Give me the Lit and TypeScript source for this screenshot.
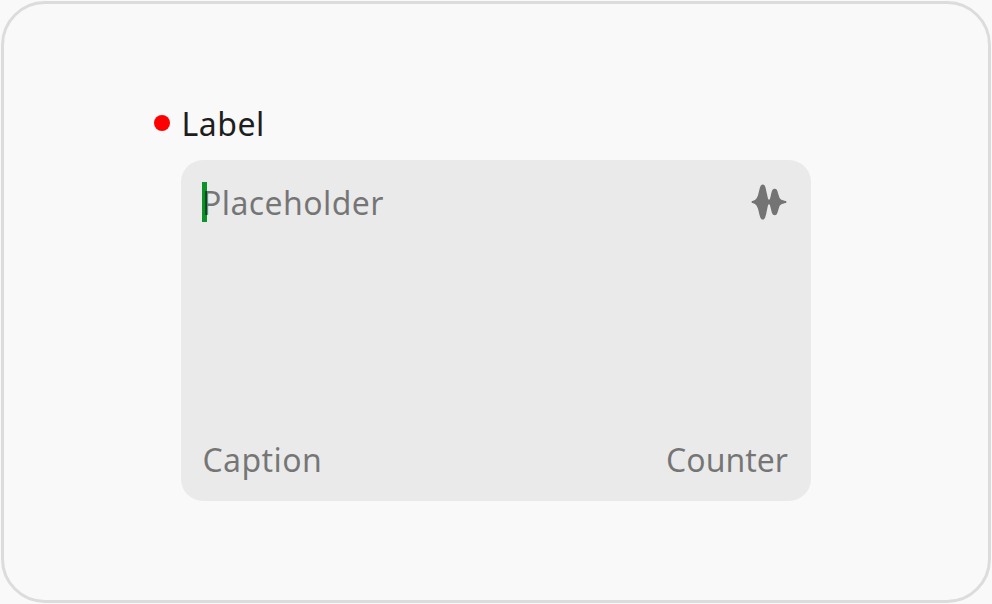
import { LitElement, html, css } from "lit";
import { customElement } from "lit/decorators.js";

@customElement("app-root")
export class AppRoot extends LitElement {
  static styles = css`
    :host { display: block; width: 992px; height: 604px; overflow: hidden; box-sizing: border-box; padding: 1px; background: #f9f9f9; font-family: "Noto Sans", sans-serif; font-size: 32px; line-height: 46px; color: #1e1e1e; }
    * { box-sizing: border-box; }
    .frame { width: 990px; height: 602px; border: 3px solid #dcdcdc; border-radius: 44px; padding: 97px 177px 0; }
    .label { position: relative; height: 44px; margin-bottom: 15px; padding-left: 0.5px; letter-spacing: 0.5px; }
    .dot { position: absolute; left: -27px; top: 14px; width: 16px; height: 16px; border-radius: 50%; background: #ff0000; }
    .area { width: 630px; height: 341px; border-radius: 22px; background: #eaeaea; color: rgba(0, 0, 0, 0.5); padding: 20px 23px 20px 21px; display: flex; flex-direction: column; justify-content: space-between; }
    .row { display: flex; justify-content: space-between; height: 44px; }
    .field { position: relative; letter-spacing: 0.42px; }
    .field span { position: relative; }
    .caret { position: absolute; left: 0; top: 2px; width: 5px; height: 40px; background: #0c9228; }
    .caption { padding-left: 0.5px; letter-spacing: 0.4px; }
    svg { width: 36px; height: 36px; margin: 4px 1px 0 0; }
  `;
  render() {
    return html`<div class="frame">
      <div class="label"><i class="dot"></i><span>Label</span></div>
      <div class="area">
        <div class="row"><div class="field"><i class="caret"></i><span>Placeholder</span></div>
        <svg viewBox="0 0 36 36"><path fill="#747474" d="M1.2 17C4.5 16.4 6 14.5 7.2 10.5C8.7 5 9 .4 11.8 .4S14.8 5 16.1 10.5C16.8 13.7 17 15.7 18 15.7S19 14.5 19.8 11.5C20.8 7.5 21.2 4.8 23.8 4.8S26.6 8 27.9 12C29 15.5 30.5 16.2 34.8 17Q36.2 18 34.8 19C30.5 19.8 29 20.5 27.9 24C26.6 28 26.4 31.2 23.8 31.2S20.8 28.5 19.8 24.5C19 21.5 19 20.3 18 20.3S16.8 22.3 16.1 25.5C14.8 31 14.6 35.6 11.8 35.6S8.7 31 7.2 25.5C6 21.5 4.5 19.6 1.2 19Q-.2 18 1.2 17Z"/></svg></div>
        <div class="row"><span class="caption">Caption</span><span>Counter</span></div>
      </div>
    </div>`;
  }
}
